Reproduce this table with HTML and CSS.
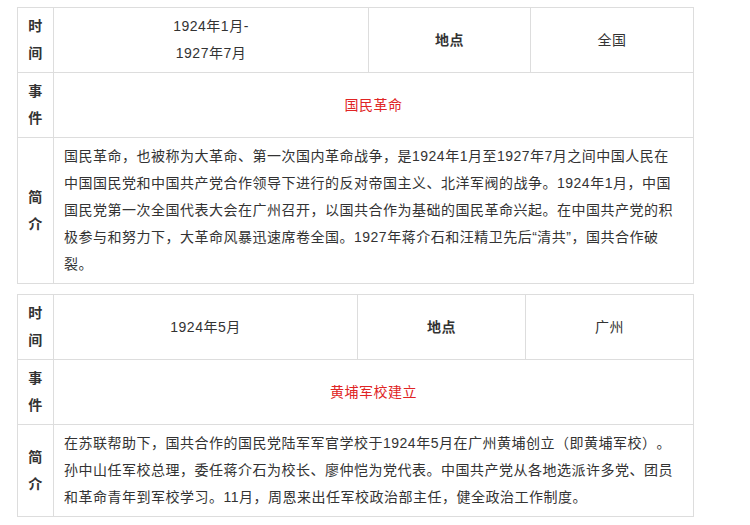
FILE: index.html
```html
<!DOCTYPE html>
<html lang="zh-CN">
<head>
    <meta charset="UTF-8">
    <meta name="viewport" content="width=device-width, initial-scale=1.0">
    <title>国民革命时期大事记</title>
    <link rel="stylesheet" href="styles.css">
</head>
<body>
    <div class="page">
        <!-- 国民革命 -->
        <table class="event-table">
            <colgroup>
                <col class="col-label">
                <col class="col-time-a">
                <col class="col-place-a">
                <col>
            </colgroup>
            <tr>
                <th>时间</th>
                <td class="center">1924年1月-<br>1927年7月</td>
                <th>地点</th>
                <td class="center">全国</td>
            </tr>
            <tr>
                <th>事件</th>
                <td colspan="3" class="center event">国民革命</td>
            </tr>
            <tr>
                <th>简介</th>
                <td colspan="3">国民革命，也被称为大革命、第一次国内革命战争，是1924年1月至1927年7月之间中国人民在中国国民党和中国共产党合作领导下进行的反对帝国主义、北洋军阀的战争。1924年1月，中国国民党第一次全国代表大会在广州召开，以国共合作为基础的国民革命兴起。在中国共产党的积极参与和努力下，大革命风暴迅速席卷全国。1927年蒋介石和汪精卫先后“清共”，国共合作破裂。</td>
            </tr>
        </table>

        <!-- 黄埔军校 -->
        <table class="event-table">
            <colgroup>
                <col class="col-label">
                <col class="col-time-b">
                <col class="col-place-b">
                <col>
            </colgroup>
            <tr>
                <th>时间</th>
                <td class="center">1924年5月</td>
                <th>地点</th>
                <td class="center">广州</td>
            </tr>
            <tr>
                <th>事件</th>
                <td colspan="3" class="center event">黄埔军校建立</td>
            </tr>
            <tr>
                <th>简介</th>
                <td colspan="3">在苏联帮助下，国共合作的国民党陆军军官学校于1924年5月在广州黄埔创立（即黄埔军校）。孙中山任军校总理，委任蒋介石为校长、廖仲恺为党代表。中国共产党从各地选派许多党、团员和革命青年到军校学习。11月，周恩来出任军校政治部主任，健全政治工作制度。</td>
            </tr>
        </table>
    </div>
</body>
</html>
```

FILE: styles.css
```css
body {
    margin: 0;
    background: #fff;
    font-family: "Liberation Sans", "Noto Sans CJK SC", sans-serif;
    font-size: 14px;
    color: #333;
}

.page {
    padding: 7px 0 0 17px;
}

/* event tables */
.event-table {
    width: 677px;
    border-collapse: collapse;
    table-layout: fixed;
    margin-bottom: 10px;
    letter-spacing: 0.5px;
    line-height: 27px;
    text-spacing-trim: space-all;
}
.event-table th,
.event-table td {
    border: 1px solid #ddd;
    padding: 5px 10px;
    vertical-align: middle;
    word-wrap: break-word;
}
.event-table th {
    font-weight: bold;
    text-align: center;
}
.event-table td { text-align: left; }
.event-table td.center { text-align: center; }
.event-table td.event { color: #e02424; }

.col-label { width: 36px; }
.col-time-a { width: 315px; }
.col-place-a { width: 162px; }
.col-time-b { width: 304px; }
.col-place-b { width: 168px; }
```
